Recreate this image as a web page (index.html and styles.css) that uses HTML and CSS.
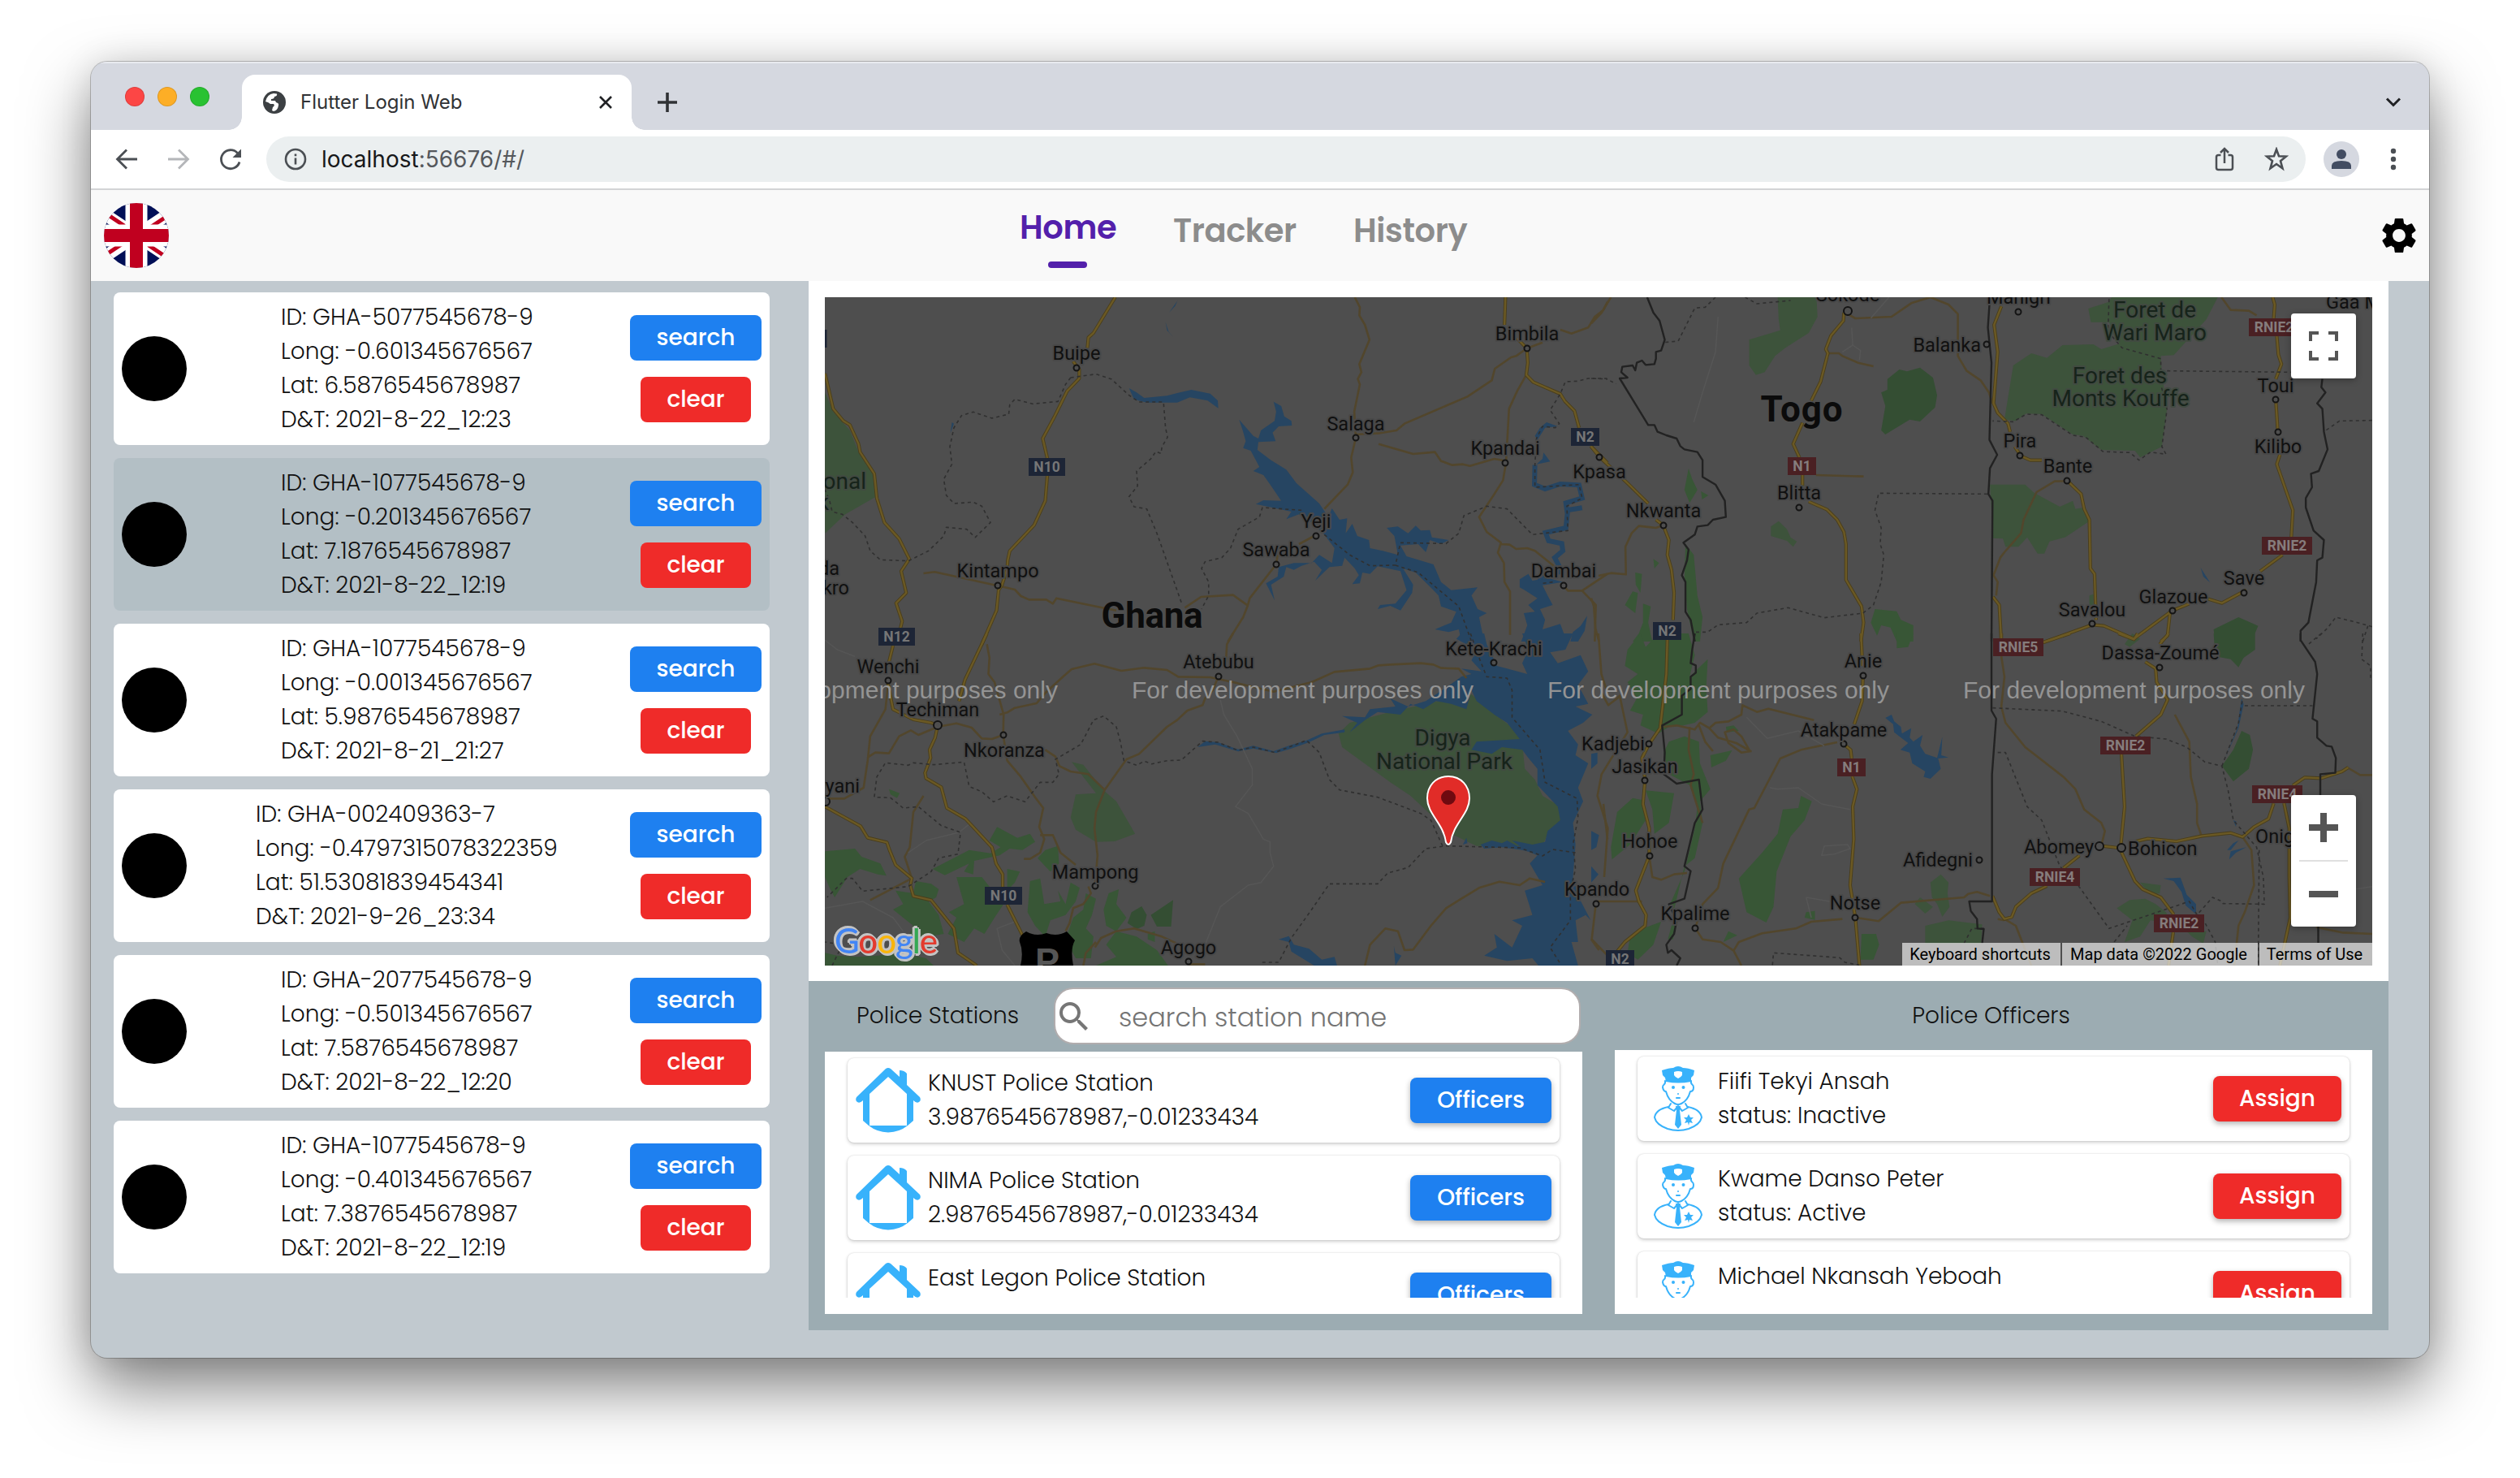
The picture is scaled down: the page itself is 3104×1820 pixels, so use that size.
FILE: index.html
```html
<!DOCTYPE html>
<html lang="en">
<head>
<meta charset="utf-8">
<title>Flutter Login Web</title>
<link rel="stylesheet" href="styles.css">
</head>
<body>
<svg width="0" height="0" class="defs">
  <symbol id="house" viewBox="0 0 80 80">
    <path d="M37 1Q40-1 43 1L54 11V3Q60 3 63 7V21L79 36Q81 40 78 42 75 44 71 40V65L64 71Q54 79 40 79.500 26 79 16 71L9 65V40Q5 44 2 42-1 40 1 36ZM40 11 17 32V71H63V32Z" fill="#38b2fb" fill-rule="evenodd"/>
  </symbol>
  <symbol id="police" viewBox="0 0 60 80">
    <g fill="none" stroke="#38b2fb" stroke-width="2" stroke-linecap="round" stroke-linejoin="round">
      <path d="M14 18C15 24 11 21 11 26Q12 31 15 31Q18 42 26 46Q30 48 34 46Q42 42 45 31Q49 31 49 26C49 21 45 24 46 18"/>
      <path d="M21 46 18 51 25 55 30 49 35 55 42 51 39 46"/>
      <path d="M18 50C8 52 2 56 1 63Q3 72 17 77Q30 81 43 77Q57 72 59 63C58 56 52 52 42 50"/>
      <path d="M28 39H32"/>
    </g>
    <g fill="#38b2fb">
      <path d="M10 5Q19 2 24 2Q30-2 36 2Q42 2 50 5L49 11 46 14V19Q30 22 15 19L14 14 11 11ZM25 7Q30 5 35 7V11Q34 13 30 15Q26 13 25 11Z" fill-rule="evenodd"/>
      <path d="M27 49H33L32 54 34 72 30 77 26 72 28 54ZM43 59 45 63H49L46 66 48 70 44 69 43 73 42 69 38 70 40 66 37 63H41Z"/>
      <circle cx="24" cy="26" r="2"/><circle cx="36.500" cy="26" r="2"/><circle cx="30" cy="34" r="1"/>
    </g>
  </symbol>
</svg>

<div class="window">
  <header class="tabstrip">
    <div class="lights"><i class="red"></i><i class="amber"></i><i class="green"></i></div>
    <div class="tab">
      <svg class="globe" viewBox="0 0 28 28"><circle cx="14" cy="14" r="14" fill="#3c4043"/><path d="M13 3Q5 4 3 13Q7 14 9 16L13 16Q15 18 12 20L11 24 13 25Q18 24 19 18Q20 15 16 14L15 12H10V10Q14 10 14 7Q18 6 17 3.500Z" fill="#fff"/></svg>
      <span class="tab-title">Flutter Login Web</span>
      <svg class="tab-close" viewBox="0 0 18 18"><path d="M2 2 16 16M16 2 2 16" stroke="#202124" stroke-width="2.600"/></svg>
    </div>
    <svg class="newtab" viewBox="0 0 24 24"><path d="M12 0V24M0 12H24" stroke="#303235" stroke-width="3.600"/></svg>
    <svg class="chevron" viewBox="0 0 20 14"><path d="M2 2.500 10 10.500 18 2.500" fill="none" stroke="#202124" stroke-width="3"/></svg>
  </header>

  <div class="toolbar">
    <svg class="tool" viewBox="0 0 32 32"><path d="M29 16H5M16 4.500 4.500 16 16 27.500" fill="none" stroke="#4b4f54" stroke-width="2.800"/></svg>
    <svg class="tool" viewBox="0 0 32 32"><path d="M3 16H27M16 4.500 27.500 16 16 27.500" fill="none" stroke="#b4b6b9" stroke-width="2.800"/></svg>
    <svg class="tool" viewBox="0 0 32 32"><path d="M27 19.500A11.500 11.500 0 1 1 24.500 8.500" fill="none" stroke="#4b4f54" stroke-width="2.800"/><path d="M29 3.500V14H18.500Z" fill="#4b4f54"/></svg>
    <div class="omnibox">
      <svg class="info" viewBox="0 0 28 28"><circle cx="14" cy="14" r="12" fill="none" stroke="#4b4f54" stroke-width="2.600"/><path d="M14 12.500V20.500M14 7.500V10.200" stroke="#4b4f54" stroke-width="2.600"/></svg>
      <span class="url"><b>localhost</b>:56676/#/</span>
      <svg class="share" viewBox="0 0 24 30"><path d="M7.500 10H4.500Q2 10 2 12.500V25.500Q2 28 4.500 28H19.500Q22 28 22 25.500V12.500Q22 10 19.500 10H16.500M12 20V2.500M7 7 12 2 17 7" fill="none" stroke="#4b4f54" stroke-width="2.500"/></svg>
      <svg class="star" viewBox="0 0 30 30"><path d="M15 3 18 11.300 27 11.600 20 17.200 22.500 26.300 15 21 7.500 26.300 10 17.200 3 11.600 12 11.300Z" fill="none" stroke="#4b4f54" stroke-width="2.600"/></svg>
    </div>
    <svg class="avatar" viewBox="0 0 44 44"><circle cx="22" cy="22" r="22" fill="#d5d8e0"/><circle cx="22" cy="16" r="6" fill="#434d62"/><path d="M10 34V30Q10 24 22 24T34 30V34Z" fill="#434d62"/></svg>
    <svg class="dots" viewBox="0 0 8 28" fill="#4b4f54"><circle cx="4" cy="4" r="3.200"/><circle cx="4" cy="14" r="3.200"/><circle cx="4" cy="24" r="3.200"/></svg>
  </div>

  <nav class="appbar">
    <svg class="flag" viewBox="0 0 80 80">
      <clipPath id="disc"><circle cx="40" cy="40" r="40"/></clipPath>
      <g clip-path="url(#disc)">
        <path fill="#010f57" d="M0 0H80V80H0Z"/>
        <path d="M-20 0 100 80M100 0-20 80" stroke="#fff" stroke-width="15"/>
        <path d="M-20-2 40 38M100 82 40 42M102 0 42 40M-22 80 38 40" stroke="#c0001f" stroke-width="5"/>
        <path d="M40 0V80M0 40H80" stroke="#fff" stroke-width="27"/>
        <path d="M40 0V80M0 40H80" stroke="#c0001f" stroke-width="16"/>
      </g>
    </svg>
    <ul class="menu">
      <li class="active"><span class="m1">Home</span></li>
      <li><span class="m2">Tracker</span></li>
      <li><span class="m3">History</span></li>
    </ul>
    <svg class="gear" viewBox="2 2 20 20"><path d="M19.140 12.940c.040-.300.060-.610.060-.940 0-.320-.020-.640-.070-.940l2.030-1.580c.180-.140.230-.410.120-.610l-1.920-3.320c-.120-.220-.370-.290-.590-.220l-2.390.960c-.500-.380-1.030-.700-1.620-.940l-.360-2.540c-.040-.240-.240-.410-.480-.410h-3.840c-.240 0-.430.170-.470.410l-.360 2.540c-.590.240-1.130.570-1.620.940l-2.390-.960c-.220-.080-.470 0-.590.220L2.740 8.870c-.120.210-.080.470.120.610l2.030 1.580c-.050.300-.090.630-.090.940s.020.640.070.940l-2.030 1.580c-.180.140-.230.410-.120.610l1.920 3.320c.120.220.370.290.590.220l2.390-.960c.500.380 1.030.700 1.620.940l.360 2.540c.050.240.240.410.480.410h3.840c.240 0 .440-.170.470-.410l.360-2.540c.590-.240 1.130-.560 1.620-.940l2.390.960c.220.080.470 0 .590-.220l1.920-3.320c.120-.220.070-.470-.120-.610l-2.010-1.580zM12 15.600c-1.980 0-3.600-1.620-3.600-3.600s1.620-3.600 3.600-3.600 3.600 1.620 3.600 3.600-1.620 3.600-3.600 3.600z"/></svg>
  </nav>

  <main class="page">
    <aside class="reports">
      <article class="report"><i class="dot"></i><div class="info-lines"><p>ID: GHA-5077545678-9</p><p>Long: -0.601345676567</p><p>Lat: 6.5876545678987</p><p>D&amp;T: 2021-8-22_12:23</p></div><div class="actions"><button class="btn blue">search</button><button class="btn red">clear</button></div></article>
      <article class="report selected"><i class="dot"></i><div class="info-lines"><p>ID: GHA-1077545678-9</p><p>Long: -0.201345676567</p><p>Lat: 7.1876545678987</p><p>D&amp;T: 2021-8-22_12:19</p></div><div class="actions"><button class="btn blue">search</button><button class="btn red">clear</button></div></article>
      <article class="report"><i class="dot"></i><div class="info-lines"><p>ID: GHA-1077545678-9</p><p>Long: -0.001345676567</p><p>Lat: 5.9876545678987</p><p>D&amp;T: 2021-8-21_21:27</p></div><div class="actions"><button class="btn blue">search</button><button class="btn red">clear</button></div></article>
      <article class="report wide"><i class="dot"></i><div class="info-lines"><p>ID: GHA-002409363-7</p><p>Long: -0.4797315078322359</p><p>Lat: 51.53081839454341</p><p>D&amp;T: 2021-9-26_23:34</p></div><div class="actions"><button class="btn blue">search</button><button class="btn red">clear</button></div></article>
      <article class="report"><i class="dot"></i><div class="info-lines"><p>ID: GHA-2077545678-9</p><p>Long: -0.501345676567</p><p>Lat: 7.5876545678987</p><p>D&amp;T: 2021-8-22_12:20</p></div><div class="actions"><button class="btn blue">search</button><button class="btn red">clear</button></div></article>
      <article class="report"><i class="dot"></i><div class="info-lines"><p>ID: GHA-1077545678-9</p><p>Long: -0.401345676567</p><p>Lat: 7.3876545678987</p><p>D&amp;T: 2021-8-22_12:19</p></div><div class="actions"><button class="btn blue">search</button><button class="btn red">clear</button></div></article>
    </aside>

    <section class="content">
      <div class="map-frame">
        <div class="map">
<svg class="canvas" viewBox="1016 366 1906 823">
  <defs>
    <g id="highways">
      <g transform="translate(1000 350) scale(.625 .33333)">
        <path d="M598 48 555 180 545 197 543 235M515 285 527 315V348L503 395 478 490 455 570 464 642V708L460 800 438 890 390 985 386 1020 385 1050 375 1110 368 1130 364 1205 335 1330M26 330 42 460 62 505 75 520 92 590 95 620 123 700 128 790 143 880 172 940 192 1015 176 1060 186 1140 166 1178 178 1245 174 1275M1367 48 1365 150M1390 200 1409 237 1411 290 1408 335 1422 362 1475 405 1484 432 1503 468 1512 530M1535 598 1568 660"/>
      </g>
      <g transform="translate(1960 350) scale(.6378 .33333)">
        <path d="M488 105 487 135 463 190 453 240 457 255 443 360 425 430M408 512 390 590 402 640M408 705 408 745M420 803 455 832 475 870 488 915 492 960V1092L522 1190 526 1250 521 1320M0 600 16 638 70 735 110 810M125 870 139 890 150 945 147 1000 155 1055 160 1140 158 1240M792 82 778 150 785 250 777 440 785 475 805 515 809 545M818 600 830 635 848 650 870 650M920 727 946 775 952 830 962 870 964 1050 972 1070 975 1240M1316 48 1320 75 1318 126M1324 192 1327 260 1333 295 1322 350M1322 426 1326 546M1330 630 1324 665 1355 835 1352 935M1335 1000 1292 1060M1265 1130 1218 1178 1190 1162M1155 1180 1122 1206 1048 1310 990 1262 968 1258 870 1325M1118 1210 1113 1298 1100 1320M776 1155 788 1185 792 1320"/>
      </g>
      <g transform="translate(1000 780) scale(.625 .33333)">
        <path d="M345 0 302 170 290 250M160 45 150 120M150 185 160 280 200 318 235 330 248 340 243 385 232 430 234 460 223 515 225 535 255 568 266 645 303 685 355 790 363 850 376 890V936M385 1002 415 1115M26 640 96 712 110 755 148 772 153 800 165 855 197 905 194 930 200 970 235 985 280 1090 288 1180 325 1227"/>
      </g>
      <g transform="translate(1960 780) scale(.6378 .33333)">
        <path d="M147 20 145 150 133 350 112 408 98 460 104 540 100 630 112 720V822L86 950 92 990 106 1040 104 1080 65 1140 50 1175M521 0 524 120M525 155 523 250 508 335M487 408 501 430 503 462M504 528 513 575 505 640 507 760 500 930 510 1050 518 1227M1090 130 1092 180 1113 245 1100 300 1052 380M1024 447 1030 640 1022 800 1050 915 1065 945 1100 975 1125 1038M1124 1104 1115 1227M1018 792 985 785M943 820 912 867M880 933 850 960 820 1010 812 1048 798 1055 788 1030 775 970M1048 770 1075 758 1130 768 1180 748 1235 737 1258 752 1280 715 1308 685 1318 628M1355 562 1378 532 1410 535 1450 510 1462 495M1338 627 1348 720V900L1350 1050 1330 1227M1070 105 1090 130M1018 0 1048 22 1055 0M1115 0 1098 40M925 0 873 33M792 0V18"/>
      </g>
    </g>
  </defs>
  <rect x="1016" y="366" width="1906" height="823" fill="#4e4e4e"/>

  <g class="park">
    <g transform="translate(1000 350) scale(.625 .33333)"><path d="M26 400 42 470 75 540 92 620 122 700 126 785 66 850 26 920Z"/></g>
    <g transform="translate(1960 350) scale(.6378 .33333)">
      <path d="M360 48H435L437 120 420 180 375 235 355 265 335 325 318 335 305 300V205L365 170 362 130ZM960 90 1000 65 1005 48H1210L1188 130 1125 262 1100 265 1102 330 1112 460 1102 600 1060 640 1050 615 985 612 950 560 930 555 870 480 840 478 820 505 798 500 815 300 850 255 880 272 910 225 970 222 985 240 1020 220 1000 140 965 140Z"/>
      <path d="M770 740 838 740 855 770 905 822 930 800 935 830 950 825 962 875 915 935 885 950 875 995 862 995 842 935 825 970 800 970 795 940 776 938ZM347 895 362 875 378 905 385 935 397 950 390 970 378 948 347 930ZM962 1150 970 1145V1200H962Z"/>
    </g>
    <g transform="translate(1000 780) scale(.625 .33333)">
      <path d="M1038 370 1060 330 1140 290 1235 250 1300 225 1340 290 1375 340 1400 400 1405 500 1425 540 1440 600 1475 640 1482 690 1450 740 1440 785 1310 785 1260 740 1180 600 1140 550 1045 420ZM512 475 535 485 575 580 600 620 637 740 597 768 560 770 520 725 510 680 520 595 560 590Z"/>
    </g>
    <g transform="translate(1960 780) scale(.6378 .33333)"><path d="M655 920 675 890 690 920 688 960 692 1010 678 1047 668 1000 658 975ZM625 1000 635 975 660 1010 645 1035ZM1015 1015 1040 985 1070 980 1090 1000 1110 1030 1120 1070 1080 1060 1060 1120 1030 1140 1045 1060ZM1060 920 1100 930 1098 960 1080 965ZM1150 1100H1188L1182 1145 1160 1120ZM645 1080 690 1060 755 1075 753 1145H645ZM1030 40 1045 0 1060 20 1040 50Z"/></g>
  </g>
  <g class="forest">
    <g transform="translate(1960 350) scale(.6378 .33333)">
      <path class="deep" d="M595 315 610 322 635 308 660 345 668 410 664 455 635 507 615 500 568 555 560 540 568 450 560 400 572 390V350Z"/>
      <path d="M188 680 195 720 205 760 190 808 180 760ZM212 765 226 780 214 795ZM548 1200 590 1208 598 1240 622 1260V1320H590L578 1268 560 1260 552 1298 540 1250ZM85 1065 98 1070 95 1140 86 1110ZM120 1015 131 1030 122 1050ZM80 1135 90 1140 85 1215 65 1185ZM100 1180 115 1190 110 1250 118 1320H80L92 1290 100 1250ZM182 960 198 1000 205 1150 215 1230 210 1320 198 1320 185 1200 180 1080Z"/>
      <path class="deep" d="M1202 1275 1250 1230 1288 1262 1275 1320H1205Z"/>
    </g>
    <g transform="translate(1000 780) scale(.625 .33333)">
      <path d="M26 805 85 795 98 825 135 850 147 895 130 890 95 870 70 900 45 975 35 940 26 900ZM152 575 173 590 168 608 155 595ZM365 715 405 755 430 740 440 770 415 800 390 795 370 820 320 840 318 890 300 880 310 850 262 893 238 870 290 820 310 800 352 812 372 790 350 765ZM165 950 200 960 205 915 235 925 250 945 245 975 230 990 250 1040 260 1110 230 1120 222 1185 190 1120 200 1080 160 1020 180 1000ZM285 900 335 900 350 935 378 1000 360 1050 340 1110 320 1090 300 1140 268 1110 285 1050 270 1030 300 1000ZM385 870 410 880 400 920 385 950ZM460 800 485 785 487 850 470 880 460 860 445 830ZM430 915 450 905 458 1000 490 990 485 950 500 1000 510 920 528 940 520 990 500 1040 470 1060 460 1120 440 1080 425 1030ZM540 960 560 980 552 1040 540 1090 555 1120 550 1200 520 1200 500 1130 515 1050 535 1020ZM585 960 605 945 600 1000 620 1050 600 1100 580 1080 575 1020ZM600 1100 640 1120 680 1170 702 1227H560L600 1195 580 1150ZM26 1180 50 1190 90 1195 130 1190 175 1180 225 1200 240 1227H26ZM662 1110 676 1100V1140L662 1130Z"/>
      <path class="deep" d="M668 1040 712 985 708 1083H680ZM630 1030 650 1008 660 1040 655 1080 640 1092 622 1070Z"/>
    </g>
    <g transform="translate(1960 780) scale(.6378 .33333)">
      <path d="M70 60 95 0 105 50 120 20 135 0H188L200 80 190 160 225 95 222 200 225 290 200 330 178 340 150 345 130 370 95 340 100 300 75 285 88 240 70 180 90 150 65 120ZM590 0H622L612 50 590 55ZM405 600 426 620 412 690 385 750 358 880 352 1010 338 1068 300 1030 285 905 330 810 360 740 370 650 400 645ZM40 835 38 790 50 660 80 608 98 615 105 690 75 780ZM150 400 180 380 208 400 210 480 230 575 210 620 215 700 200 830 180 860 160 1020 150 1010 180 880 200 720 205 640 190 560 150 520 140 440ZM105 580 160 590 150 700 122 740 118 650ZM230 450 272 432 260 470 232 495ZM100 1090 135 1065 120 1150 90 1205 70 1180 75 1120ZM165 1060 158 1130 148 1130 155 1080ZM265 1100 282 1115 255 1140ZM415 1030 432 1025V1058L412 1050ZM522 1110H550L556 1150 545 1205H520ZM260 345 275 340 285 360 262 365Z"/>
      <path class="deep" d="M1202 0H1282V60L1260 90 1250 125 1235 95 1205 85ZM1256 360 1272 375 1278 430 1270 500 1240 547 1218 490 1240 430Z"/>
    </g>
  </g>

  <g class="water">
    <g transform="translate(1000 350) scale(.625 .33333)">
      <path d="M625 384 640 400 655 420 700 412 720 402 748 390 785 404 800 430 801 458 780 430 745 418 720 437H660L635 425ZM910 434 925 450 931 488 945 505 946 522 920 525 908 548 914 580 880 583 878 612 905 650 935 685 955 735 1000 810 1018 860 1025 828 1040 870 1055 865 1052 920 1065 885 1075 930 1098 945 1100 975 1125 985 1155 1000 1148 930 1133 900 1155 895 1175 920 1190 892 1200 910 1218 908 1222 935 1255 945 1240 960 1218 945 1210 990 1195 960 1160 965 1172 1005 1225 1035 1240 1100 1260 1130 1312 1120 1300 1150 1312 1200 1330 1215 1315 1230 1325 1320H1280L1275 1275 1255 1285 1228 1275 1260 1250 1270 1210 1240 1190 1235 1150 1225 1130 1190 1065 1165 1050 1185 1110 1183 1140 1160 1205 1140 1188 1115 1200 1120 1185 1150 1180 1172 1130 1160 1060 1115 1042 1100 1070 1085 1065 1080 1105 1065 1108 1078 1075 1070 1050 1050 1010 1045 1040 1020 1045 992 1095 1005 1055 990 1025 965 1040 950 1055 935 1045 930 1080 905 1110 912 1168 895 1105 918 1080 920 1045 950 1030 985 1030 1000 1000 1025 1030 1030 975 1010 925 985 880 960 850 935 868 945 840 875 812 890 798 925 800 905 745 890 705 870 690 882 675 865 615 850 605 855 580 850 545 842 500 870 560 880 570 885 540 912 505 915 470ZM1448 510 1470 525 1445 530 1430 575 1425 560 1435 530ZM1442 622 1455 655 1428 665 1440 645ZM1495 1320 1500 1285 1515 1262 1528 1225 1523 1280 1510 1320ZM1395 1090 1412 1070 1420 1095 1450 1085 1480 1100 1440 1112 1450 1150 1460 1185 1435 1200 1445 1240 1440 1275 1475 1255 1482 1290 1468 1320H1398L1410 1260 1403 1215 1425 1210 1412 1185 1430 1160 1405 1130 1395 1120ZM722 55 716 80 704 105 720 62ZM697 140 703 175 712 195 700 170ZM276 510 280 515 273 550Z"/>
      <path class="river" d="M1425 668 1424 740 1445 756 1475 738 1512 742 1518 790 1486 808 1488 835 1518 826M1490 830 1486 900 1446 918 1452 948 1478 958 1480 985 1464 1010 1478 1060 1430 1085"/>
    </g>
    <g transform="translate(1000 780) scale(.625 .33333)">
      <path d="M1280 0H1325L1330 40 1350 120 1370 130 1410 150 1400 110 1412 60 1400 0H1500L1485 60 1455 70 1470 110 1515 80 1530 140 1510 190 1530 260 1505 270 1538 300 1520 330 1490 360 1510 410 1505 450 1530 480 1510 570 1520 620 1500 700 1505 780 1500 900 1510 970 1535 1060 1525 1040 1505 1060 1510 1140 1497 1140 1510 1227H1432L1420 1200 1370 1210 1325 1190 1350 1160 1345 1110 1380 1160 1400 1080 1380 1060 1420 1040 1405 950 1440 930 1415 850 1430 820 1405 800 1380 765 1420 780 1445 770 1450 730 1475 690 1470 640 1450 600 1430 560 1430 500 1412 460 1400 430 1360 420 1340 445 1300 430 1310 400 1350 395 1395 390 1370 330 1345 300 1310 250 1300 210 1290 280 1260 260 1230 250 1205 280 1180 260 1160 300 1115 290 1090 320 1060 365 1075 330 1045 305 1090 310 1100 280 1150 270 1140 240 1175 270 1210 250 1250 200 1280 160 1300 150 1280 130 1320 140 1300 100 1310 60 1270 20ZM760 420 775 398 800 402 840 428 870 415 910 435 940 415 975 395 1005 370 1050 355 1050 365 1010 375 980 402 945 425 915 442 870 425 840 436 795 410ZM1318 780 1340 765 1360 775 1370 765 1390 785 1420 795 1440 820 1400 800 1360 790 1325 795ZM1283 780 1290 755 1292 775ZM920 1130 940 1118 950 1150 980 1165 1005 1205 1030 1195 1035 1227H990L945 1175 940 1140ZM1147 1155 1150 1180 1162 1190 1150 1227Z"/>
    </g>
    <g transform="translate(1960 780) scale(.6378 .33333)">
      <path d="M568 312 580 300 585 325 598 345 600 370 618 350 615 385 622 400 640 375 635 415 645 445 668 460 678 382 676 450 690 458 670 462 675 500 655 537 642 530 645 510 620 480 615 440 597 430 612 405 595 380 585 365 583 335ZM1105 905 1138 902 1150 965 1168 1000V1037L1148 1005 1140 955 1125 915ZM1256 240 1260 262 1250 350 1222 470 1248 350 1252 290ZM1240 690 1246 695 1245 715ZM1228 800 1240 775 1250 765 1235 800ZM1232 835 1235 805 1265 790 1245 810ZM0 445 12 440V480L0 500ZM0 730 15 745 10 790 0 800ZM0 860 14 890 0 920Z"/>
    </g>
    <g transform="translate(1960 350) scale(.6378 .33333)"><path d="M1177 1048 1195 1102 1182 1080Z"/></g>
  </g>

  <g class="minor">
    <g transform="translate(1000 350) scale(.625 .33333)"><path d="M1070 48 1080 85 1079 115 1090 150 1099 205 1079 295 1083 325 1076 350 1080 370 1069 470 1072 567 1063 640 1066 695 1056 740 1010 830M1072 555 1120 550 1152 540 1168 515 1292 415 1340 355 1346 312 1378 270 1388 265 1409 237 1440 215M1475 168 1497 182 1530 160 1543 120 1560 95 1568 65M1117 590 1185 627 1228 620 1240 653 1262 668 1283 665 1297 671 1345 645 1360 650 1368 660 1362 725 1345 775 1315 860 1330 915 1358 955 1352 992 1364 1030 1365 1100 1376 1135V1295M1408 335 1390 395 1374 460 1368 660M1358 960 1375 962 1388 978 1410 975 1425 985 1462 1040M220 1068 242 1063 370 1115 400 1128 412 1152 428 1165 462 1165 475 1180 482 1160 560 1190 600 1205M735 1195 767 1155 830 1148 859 1187 850 1230 820 1320M859 1187 863 1160 915 1035 918 1000M960 960 990 930M1481 1112 1490 1132H1518L1568 1070M1518 1132 1545 1185 1543 1320"/></g>
    <g transform="translate(1960 350) scale(.6378 .33333)"><path d="M38 48 20 105 0 145M495 110 510 126 580 120 618 70 655 48 690 75 708 110V265L725 320 752 355 768 400 775 440M457 255 478 255 485 265 515 290 545 303M434 705 526 710M920 727 895 728 860 768 835 870 830 920 798 990 790 1010 777 1075 785 1100 782 1150M14 1077 38 1067 67 1072 66 970 78 920 92 893 125 900 139 890M0 1160 5 1190 8 1270 15 1320M1217 48 1235 95 1270 98 1285 115"/></g>
    <g transform="translate(1000 780) scale(.625 .33333)"><path d="M830 0 818 40 816 105M345 40 350 90 348 150 360 180 363 200 378 300 377 375 385 470 412 530 440 605 456 645 448 715 458 760 450 810 430 833 418 833M370 300 385 292 400 275 443 258 460 220 495 160 512 132 557 112 610 138 655 127 700 135 722 160 785 162 830 180 910 215 985 180 1030 142 1100 130 1117 118 1140 115 1200 110 1225 115 1240 128 1275 130 1290 165M801 160 790 210 775 240 770 265 740 285 720 320 700 345 645 445 620 465 577 578 560 660 557 720 563 820 558 933M460 430 480 455 488 490 510 510 545 520 577 578M150 190 145 280 115 380 110 470 102 570 64 610H26M110 458 125 440 152 443 172 380 195 358 210 375 248 345 285 332 315 348 335 388 355 390 377 375M220 600 200 660 193 790 183 825 197 905 115 985M450 745 475 745 490 810 520 855M545 935 550 960 535 1000 515 1015 508 1070 500 1100M558 1160 570 1125 600 1100 635 1090 690 1120 725 1150M743 1222H775M535 1227 540 1180 560 1140M1090 1227 1100 1150 1130 1090 1155 1100 1168 1170 1185 1168 1220 1080 1250 1015 1280 980 1315 940 1355 917 1395 930 1415 905 1445 918M1545 1000 1537 1130 1568 1190M1560 630 1568 760M1550 0 1556 150 1568 220"/></g>
    <g transform="translate(1960 780) scale(.6378 .33333)"><path d="M475 402 405 430 365 462 315 645 305 650 255 850 245 940 230 970 215 1000 201 1089 215 1130 250 1140 275 1172 285 1140 330 1108 395 1090 425 1065 485 1055M112 822 118 900 135 910 160 890 185 885M98 990 10 990M512 1050 555 1063 598 995 720 975 728 962 745 955 770 970M275 1172 290 1227M140 345 165 340 200 355 210 330 228 350 240 330 265 325 290 300 292 265 320 290 342 278 430 320M208 340 220 400 235 435M228 350 245 385 280 405 308 435 290 440 265 405 258 365 275 355 290 380 305 430M190 345 188 430 198 520 192 560 205 640 215 700M792 84 798 160 792 270 800 330 838 420 912 530 935 575 952 650 985 700 992 730 985 785M1127 300 1155 400 1158 530 1170 630V700L1178 745M798 1055 820 1080 850 1227M1258 752 1275 800 1280 930 1262 1030 1250 1080 1242 1227M1460 495 1485 523H1508M1400 1085 1450 1105 1508 1110M20 220 33 265 50 240 55 230 70 365 20 520 12 600 32 720 25 900M0 1130 15 1170M785 1055 798 1060"/></g>
  </g>
  <g class="faint">
    <g transform="translate(1000 780) scale(.625 .33333)"><path d="M805 245 812 300 838 380 868 500V560L835 640 860 665 890 760 903 770V810L910 860 885 920 860 930 805 1010 775 1150M26 25 50 60 85 85M310 705 290 735 225 765 190 810M26 1015 100 990 160 1050 180 1100M400 1065 365 1090 375 1170 400 1227"/></g>
    <g transform="translate(1960 780) scale(.6378 .33333)"><path d="M345 570 360 575 400 570 445 630 500 650M445 820 450 785 495 780 500 795 470 815ZM415 975 425 1050M415 975 490 1000M300 310 340 388 400 360 450 415M1475 945 1508 935"/></g>
    <g transform="translate(1960 350) scale(.6378 .33333)"><path d="M245 120 240 250 215 400 198 510M503 160 505 225 485 250M505 225 520 245 518 280M575 48 540 125"/></g>
  </g>
  <use href="#highways" class="casing"/>
  <use href="#highways" class="core"/>

  <g class="dash">
    <g transform="translate(1000 350) scale(.625 .33333)"><path d="M510 345 560 332 590 350 625 410 645 435 693 435 697 530 701 565 690 600 688 625 678 618 668 645 640 690 642 745 625 785 635 822 660 830 680 920 730 1185M510 345 500 370 485 433 435 442 400 425 390 445 388 480 355 495 318 472 295 485 280 530 272 600 276 665 260 720 265 780 280 810 318 805 335 820 352 880 322 935 305 905 265 898 260 930 230 985 190 1022 135 1018 115 985 105 930 80 880 60 850 40 840 35 800 26 760M965 835 888 825 882 860 840 905 825 975 808 1010 775 1025 768 1050 782 1100V1150L768 1200M1010 925 1060 1000 1100 1040 1150 1038 1160 955 1250 958 1275 920 1285 855 1330 820 1370 830 1420 925 1490 910 1488 820 1518 790 1512 740 1470 745 1425 750V670L1428 570 1440 525 1465 530 1473 515 1455 465 1475 405 1485 360 1510 358 1530 348 1568 350M1150 1038 1195 1065 1275 1190 1300 1320M1460 1100 1440 1105"/></g>
    <g transform="translate(1960 350) scale(.6378 .33333)"><path d="M0 348 28 348 48 368M240 48 220 85 200 88 168 210 140 215M297 48 320 72 385 60M1000 55 998 175 1025 235 1100 275V370L1112 462 1102 600 1110 628 1080 620 1058 650 1040 622 988 618 955 565 930 558 870 482 840 480 815 508 775 505M1112 320 1355 325M1508 503 1445 505 1415 545M765 775 555 772 548 835 560 900 558 960 565 1000 560 1100 545 1185 525 1215 450 1232 380 1195 320 1215 300 1250 245 1258 225 1285 200 1285M1508 1265 1480 1250 1438 1230 1422 1270 1400 1310M1500 1262 1490 1320"/></g>
    <g transform="translate(1000 780) scale(.625 .33333)"><path d="M1298 0 1315 90 1330 160 1370 165 1380 210V310L1435 430 1445 550 1508 610 1510 680 1500 780 1505 870 1495 950V1060L1455 1160 1475 1220M1505 810 1460 798 1440 822 1395 792 1250 785 1210 795 1175 865 1135 885 1115 925H1020L985 1020 945 1125 920 1215H885M1243 785 1220 690 1200 665 1115 605 1040 578 1020 540 1000 440 975 395 912 440 870 420 840 432 800 402 770 398 728 468 700 470 670 482 655 472 640 487 615 470 608 400 600 345 575 305 555 320 530 410 480 465 487 520 475 550 450 550 420 622 385 600 358 622 335 585 310 565 300 475 240 485 200 478 190 487 145 478 128 530 123 605 155 607 180 645 210 640 255 710 293 735 288 815 250 830 235 880 190 935 100 952 80 905 68 905 30 975M40 1227 60 1150 26 1140"/></g>
    <g transform="translate(1960 780) scale(.6378 .33333)"><path d="M785 440 800 440 842 640 870 690 905 860 940 930 1000 1090 1155 990 1170 1040 1200 975 1218 990 1220 998 1300 1000 1298 900 1285 790 1240 690 1230 580 1218 490 1185 475 1150 420 1110 390 1050 380 985 325 910 287 775 275M1218 490 1250 330 1258 240M1262 267H1393M1290 800 1288 1227M1010 1140 1035 1080M1180 1050 1205 1140 1210 1227M720 1145 735 1090 760 1090M350 1225 352 1180 480 1198 490 1215 518 1225M1410 0 1385 40M1490 0 1488 95 1505 120V165"/></g>
  </g>
  <g class="border">
    <g transform="translate(1960 350) scale(.6378 .33333)"><path d="M108 48 120 105 132 135 142 205 135 245 125 250V275L122 295 105 298 98 282 88 290 85 318 80 300 60 305 58 325 70 345 55 348 110 520 122 520 128 545 145 558 165 570 172 598 180 610 205 620 215 650V712L240 740 258 800 260 860 235 870 225 890 205 895 200 925 178 955 188 980 185 1020 175 1075 182 1100V1210L192 1240 200 1320M770 48 766 160 773 290 769 575 784 630 770 680 767 775 775 800 773 1320M1412 350 1410 380 1418 400 1402 440 1412 460 1415 545 1422 610 1405 690 1390 700 1392 750 1380 790V825L1395 910 1415 945 1412 1010 1402 1020 1400 1100 1385 1250 1370 1280V1320"/></g>
    <g transform="translate(1960 780) scale(.6378 .33333)"><path d="M200 0 195 60 192 110 202 118V145L192 160V205L175 230V300L137 340 142 440 140 520 165 555 208 540 215 650 200 700 180 860 192 878 180 980 150 1000 165 1060 160 1110 145 1150 148 1180 155 1170 172 1200 165 1227M773 0V285L782 315 774 520V990H730L733 1025 745 1055 746 1090 758 1092 755 1145M1370 0V25L1398 105 1402 150 1393 315 1402 325V385L1420 415 1430 418 1438 460 1437 515 1408 520V600M1404 1083V1143"/></g>
  </g>

  <g class="town-dots">
    <circle cx="1326" cy="453" r="3.500"/><circle cx="1881" cy="429" r="3.500"/><circle cx="1670" cy="539" r="3.500"/><circle cx="1854" cy="570" r="3.500"/><circle cx="1621" cy="660" r="3.500"/><circle cx="1572" cy="695" r="3.500"/><circle cx="1229" cy="721" r="3.500"/><circle cx="1926" cy="721" r="3.500"/><circle cx="1970" cy="563" r="3.500"/>
    <circle cx="2276" cy="383" r="5"/><circle cx="2447" cy="424" r="3.500"/><circle cx="2486" cy="384" r="3.500"/><circle cx="2803" cy="492" r="3.500"/><circle cx="2488" cy="561" r="3.500"/><circle cx="2546" cy="592" r="3.500"/><circle cx="2806" cy="532" r="3.500"/><circle cx="2216" cy="625" r="3.500"/><circle cx="2049" cy="647" r="3.500"/><circle cx="2764" cy="730" r="3.500"/><circle cx="2676" cy="752" r="3.500"/><circle cx="2577" cy="768" r="3.500"/>
    <circle cx="1094" cy="838" r="3.500"/><circle cx="1155" cy="893" r="5"/><circle cx="1236" cy="905" r="3.500"/><circle cx="1017" cy="987" r="5"/><circle cx="1501" cy="833" r="3.500"/><circle cx="1840" cy="816" r="3.500"/><circle cx="1349" cy="1091" r="3.500"/><circle cx="1464" cy="1184" r="3.500"/><circle cx="1966" cy="1113" r="3.500"/>
    <circle cx="2031" cy="916" r="3.500"/><circle cx="2026" cy="961" r="3.500"/><circle cx="2032" cy="1054" r="3.500"/><circle cx="2088" cy="1143" r="3.500"/><circle cx="2285" cy="1130" r="3.500"/><circle cx="2438" cy="1059" r="3.500"/><circle cx="2271" cy="916" r="3.500"/><circle cx="2295" cy="832" r="3.500"/><circle cx="2586" cy="1042" r="5"/><circle cx="2613" cy="1044" r="5"/><circle cx="2660" cy="822" r="3.500"/>
  </g>

  <g class="shield national">
    <rect x="1267" y="564" width="45" height="22"/><rect x="1082" y="773" width="45" height="22"/><rect x="1935" y="527" width="35" height="22"/><rect x="2036" y="766" width="35" height="22"/><rect x="1213" y="1092" width="46" height="22"/><rect x="1978" y="1170" width="35" height="22"/><rect x="1016" y="406" width="2.500" height="22"/>
    <text x="1289.500" y="581">N10</text><text x="1104.500" y="790">N12</text><text x="1952.500" y="544">N2</text><text x="2053.500" y="783">N2</text><text x="1236" y="1109">N10</text><text x="1995.500" y="1187">N2</text>
  </g>
  <g class="shield inter">
    <rect x="2770" y="392" width="62" height="22"/><rect x="2786" y="661" width="62" height="22"/><rect x="2202" y="563" width="35" height="22"/><rect x="2455" y="786" width="62" height="22"/><rect x="2587" y="907" width="62" height="22"/><rect x="2774" y="967" width="62" height="22"/><rect x="2500" y="1069" width="62" height="22"/><rect x="2653" y="1126" width="62" height="22"/><rect x="2263" y="934" width="35" height="22"/>
    <text x="2801" y="409">RNIE2</text><text x="2817" y="678">RNIE2</text><text x="2219.500" y="580">N1</text><text x="2486" y="803">RNIE5</text><text x="2618" y="924">RNIE2</text><text x="2805" y="984">RNIE4</text><text x="2531" y="1086">RNIE4</text><text x="2684" y="1143">RNIE2</text><text x="2280.500" y="951">N1</text>
  </g>

  <g class="town">
    <text x="1326" y="443">Buipe</text><text x="1881" y="419">Bimbila</text><text x="1670" y="530">Salaga</text><text x="1854" y="560">Kpandai</text><text x="1621" y="650">Yeji</text><text x="1572" y="685">Sawaba</text><text x="1229" y="711">Kintampo</text><text x="1926" y="711">Dambai</text><text x="1970" y="589">Kpasa</text>
    <text class="end" x="1034" y="708">da</text><text class="end" x="1046" y="732">kro</text>
    <text x="2276" y="371">Sokode</text><text class="end" x="2440" y="433">Balanka</text><text class="start" x="2447" y="374">Manigri</text><text class="start" x="2865" y="380">Gaa Mata</text><text x="2803" y="483">Toui</text><text x="2488" y="551">Pira</text><text x="2547" y="582">Bante</text><text x="2806" y="558">Kilibo</text><text x="2216" y="615">Blitta</text><text x="2049" y="637">Nkwanta</text><text x="2764" y="720">Save</text><text x="2677" y="743">Glazoue</text><text x="2577" y="759">Savalou</text>
    <text x="1094" y="829">Wenchi</text><text x="1155" y="882">Techiman</text><text x="1237" y="932">Nkoranza</text><text class="end" x="1059" y="976">yani</text><text x="1501" y="823">Atebubu</text><text x="1840" y="807">Kete-Krachi</text><text x="1349" y="1082">Mampong</text><text x="1464" y="1175">Agogo</text><text x="1967" y="1103">Kpando</text>
    <text x="1987" y="924">Kadjebi</text><text x="2026" y="952">Jasikan</text><text x="2032" y="1044">Hohoe</text><text x="2088" y="1133">Kpalime</text><text x="2285" y="1120">Notse</text><text x="2387" y="1067">Afidegni</text><text x="2271" y="907">Atakpame</text><text x="2295" y="822">Anie</text><text class="end" x="2579" y="1051">Abomey</text><text class="start" x="2621" y="1053">Bohicon</text><text class="start" x="2778" y="1038">Onigbolo</text><text x="2661" y="812">Dassa-Zoumé</text>
  </g>
  <g class="town reserve">
    <text class="end" x="1067" y="602">onal</text><text class="end" x="1021" y="628">k</text>
    <text x="2654" y="391">Foret de</text><text x="2654" y="419">Wari Maro</text><text x="2611" y="472">Foret des</text><text x="2612" y="500">Monts Kouffe</text>
    <text x="1777" y="918">Digya</text><text x="1779" y="947">National Park</text>
  </g>
  <g class="country"><text x="1419" y="773" textLength="125">Ghana</text><text x="2219" y="519" textLength="101">Togo</text></g>

  <g class="badge">
    <path d="M1256 1160Q1254 1153 1264 1147Q1276 1154 1289 1149Q1302 1154 1314 1147L1324 1158Q1318 1168 1322 1189H1257Q1261 1172 1256 1160Z"/>
    <text x="1290" y="1199">P</text>
  </g>

  <g class="watermark">
    <text x="882" y="860" textLength="421">For development purposes only</text><text x="1394" y="860" textLength="421">For development purposes only</text><text x="1906" y="860" textLength="421">For development purposes only</text><text x="2418" y="860" textLength="421">For development purposes only</text>
  </g>
  <g class="logo">
    <text x="1028" y="1174" textLength="127"><tspan fill="#4285f4">G</tspan><tspan fill="#e33b2e">o</tspan><tspan fill="#f9b50b">o</tspan><tspan fill="#4285f4">g</tspan><tspan fill="#34a853">l</tspan><tspan fill="#e33b2e">e</tspan></text>
  </g>
  <path d="M1784 956C1768 956 1758 968 1758 983C1758 1002 1778 1014 1781 1037Q1784 1043 1787 1037C1790 1014 1810 1002 1810 983C1810 968 1800 956 1784 956Z" fill="#e12c28" stroke="#fff" stroke-width="2"/>
  <circle cx="1784" cy="982" r="9" fill="#6f0a10"/>
</svg>
          <div class="control fullscreen"><svg viewBox="0 0 36 36"><path d="M2 12V2H12M24 2H34V12M34 24V34H24M12 34H2V24" fill="none" stroke="#555" stroke-width="4"/></svg></div>
          <div class="control zoom"><svg viewBox="0 0 36 36"><path d="M18 0V36M0 18H36" stroke="#555" stroke-width="8"/></svg><hr><svg viewBox="0 0 36 36"><path d="M0 18H36" stroke="#555" stroke-width="8"/></svg></div>
          <div class="credits"><span>Keyboard shortcuts</span><span>Map data ©2022 Google</span><span>Terms of Use</span></div>
        </div>
      </div>

      <div class="lower">
        <div class="column stations">
          <div class="column-head"><h2>Police Stations</h2>
            <div class="search"><svg viewBox="3 3 17.500 17.500"><path d="M15.500 14h-.790l-.280-.270A6.470 6.470 0 0 0 16 9.500 6.500 6.500 0 1 0 9.500 16c1.610 0 3.090-.590 4.230-1.570l.270.280v.790l5 4.990L20.490 19l-4.990-5zm-6 0C7.010 14 5 11.990 5 9.500S7.010 5 9.500 5 14 7.010 14 9.500 11.990 14 9.500 14z" fill="#767676"/></svg><span>search station name</span></div>
          </div>
          <div class="panel"><div class="scroll">
            <div class="row"><svg class="house"><use href="#house"/></svg><div class="who"><p>KNUST Police Station</p><p>3.9876545678987,-0.01233434</p></div><button class="btn blue">Officers</button></div>
            <div class="row"><svg class="house"><use href="#house"/></svg><div class="who"><p>NIMA Police Station</p><p>2.9876545678987,-0.01233434</p></div><button class="btn blue">Officers</button></div>
            <div class="row"><svg class="house"><use href="#house"/></svg><div class="who"><p>East Legon Police Station</p><p>4.9876545678987,-0.01233434</p></div><button class="btn blue">Officers</button></div>
          </div></div>
        </div>
        <div class="column officers">
          <div class="column-head"><h2>Police Officers</h2></div>
          <div class="panel"><div class="scroll">
            <div class="row"><svg class="police"><use href="#police"/></svg><div class="who"><p>Fiifi Tekyi Ansah</p><p>status: Inactive</p></div><button class="btn red">Assign</button></div>
            <div class="row"><svg class="police"><use href="#police"/></svg><div class="who"><p>Kwame Danso Peter</p><p>status: Active</p></div><button class="btn red">Assign</button></div>
            <div class="row"><svg class="police"><use href="#police"/></svg><div class="who"><p>Michael Nkansah Yeboah</p><p>status: Active</p></div><button class="btn red">Assign</button></div>
          </div></div>
        </div>
      </div>
    </section>
  </main>
</div>
</body>
</html>
```
FILE: styles.css
```css
* { box-sizing: border-box; margin: 0; padding: 0; }
body {
  width: 3104px; height: 1820px; overflow: hidden; background: #fff;
  padding: 76px 112px; color: #111;
  font: 300 28px/42px Poppins, Inter, "Open Sans", sans-serif;
}
.defs { position: absolute; }
svg { display: block; flex: none; }
.window {
  width: 2880px; height: 1596px; border-radius: 20px; overflow: hidden;
  display: flex; flex-direction: column; background: #c1c9cf;
  box-shadow: 0 0 0 1px rgba(0,0,0,.22), 0 36px 80px rgba(0,0,0,.5), 0 0 40px rgba(0,0,0,.1);
}

/* browser chrome */
.tabstrip { height: 84px; flex: none; background: #d5d8e0; display: flex; align-items: flex-end; box-shadow: inset 0 2px 0 #e8eaef; }
.lights { display: flex; gap: 16px; padding-left: 42px; height: 53px; width: 186px; align-items: flex-start; }
.lights i { width: 24px; height: 24px; border-radius: 50%; border: 1px solid rgba(0,0,0,.12); }
i.red { background: #fc4645; } i.amber { background: #fdae26; } i.green { background: #29c232; }
.tab { position: relative; width: 480px; height: 68px; background: #fff; border-radius: 16px 16px 0 0; display: flex; align-items: center; padding: 0 23px 0 26px; }
.tab::before, .tab::after { content: ""; position: absolute; bottom: 0; width: 16px; height: 16px; }
.tab::before { left: -16px; background: radial-gradient(circle at 0 0, transparent 15.500px, #fff 16px); }
.tab::after { right: -16px; background: radial-gradient(circle at 100% 0, transparent 15.500px, #fff 16px); }
.globe { width: 28px; height: 28px; }
.tab-title { flex: 1; margin-left: 18px; font: 400 24px/30px Inter, sans-serif; color: #303235; }
.tab-close { width: 18px; height: 18px; }
.newtab { width: 24px; height: 24px; margin: 0 auto 22px 32px; }
.chevron { width: 20px; height: 14px; margin: 0 34px 27px 0; }
.toolbar { height: 74px; flex: none; background: #fff; border-bottom: 2px solid #d3d4d6; display: flex; align-items: center; padding-left: 28px; }
.tool { width: 32px; height: 32px; margin-right: 32px; }
.toolbar .tool:nth-child(3) { margin-right: 28px; }
.omnibox { width: 2512px; height: 56px; border-radius: 28px; background: #ebeff0; display: flex; align-items: center; padding: 0 21px 0 22px; }
.info { width: 28px; height: 28px; }
.url { flex: 1; margin-left: 18px; font: 400 28px/36px Inter, sans-serif; color: #55585c; }
.url b { font-weight: 400; color: #17181a; }
.share { width: 24px; height: 30px; margin-right: 37px; }
.star { width: 30px; height: 30px; }
.avatar { width: 44px; height: 44px; margin-left: 22px; }
.dots { width: 8px; height: 28px; margin-left: 38px; }

/* app bar */
.appbar { height: 112px; flex: none; background: #f9f9f9; display: flex; align-items: center; padding: 0 16px; }
.flag { width: 80px; height: 80px; }
.menu { flex: 1; list-style: none; display: flex; height: 112px; padding-left: 1048px; font-size: 40px; line-height: 56px; font-weight: 600; letter-spacing: -.4px; color: #8c8c8c; }
.menu li { padding-top: 22px; }
.menu li + li { margin-left: 72px; }
.menu li + li + li { margin-left: 71px; }
.menu li.active { padding-top: 18px; color: #5320ab; display: flex; flex-direction: column; align-items: center; }
.menu li.active::after { content: ""; width: 48px; height: 8px; border-radius: 4px; background: #5320ab; margin-top: 14px; }
.menu span { display: block; white-space: nowrap; }
.m1 { width: 117px; } .m2 { width: 151px; } .m3 { width: 138px; }
.gear { width: 44px; height: 44px; margin-right: -1px; }

/* reports */
.page { flex: 1; display: flex; min-height: 0; }
.reports { width: 884px; padding: 14px 0 0 28px; display: flex; flex-direction: column; gap: 16px; }
.report { width: 808px; height: 188px; border-radius: 8px; background: #fff; display: flex; align-items: center; padding: 0 10px; }
.report.selected { background: #b3bfc5; }
.dot { width: 80px; height: 80px; border-radius: 50%; background: #000; }
.info-lines { flex: 1; padding: 0 0 0 116px; white-space: nowrap; }
.wide .info-lines { padding-left: 85px; }
.actions { display: flex; flex-direction: column; align-items: center; gap: 20px; width: 162px; }
.btn { height: 56px; border: 0; border-radius: 8px; color: #fff; font: inherit; font-weight: 500; }
.blue { background: #1e80f0; width: 162px; }
.red { background: #ef2b29; width: 136px; }

/* content */
.content { width: 1946px; height: 1292px; display: flex; flex-direction: column; background: #9cacb2; }
.map-frame { height: 862px; padding: 20px 20px 19px; background: #fff; flex: none; }
.map { position: relative; width: 1906px; height: 823px; overflow: hidden; }
.canvas { width: 1906px; height: 823px; }
.canvas path { vector-effect: non-scaling-stroke; }
.park { fill: #3d533b; } .forest { fill: #385636; } .deep { fill: #344e33; }
.water { fill: #264562; }
.river { fill: none; stroke: #264562; stroke-width: 6; }
.minor, .faint, .casing, .core, .dash, .border { fill: none; stroke-linejoin: round; }
.minor { stroke: #52462c; stroke-width: 2.600; }
.faint { stroke: #565656; stroke-width: 1.500; }
.casing { stroke: #4a3e1b; stroke-width: 4.200; }
.core { stroke: #6b5924; stroke-width: 2.400; }
.dash { stroke: #303030; stroke-width: 1.600; stroke-dasharray: 4 4; }
.border { stroke: #222; stroke-width: 2.400; }
.town-dots { fill: #4e4e4e; stroke: #141414; stroke-width: 2; }
.shield text { font: 700 17.500px Roboto, sans-serif; text-anchor: middle; fill: #767676; }
.national rect { fill: #1d2536; } .inter rect { fill: #4a2023; } .inter text { fill: #857c7c; }
.town text { font: 400 23.500px Roboto, sans-serif; text-anchor: middle; fill: #101010; stroke: #484848; stroke-width: 4; stroke-linejoin: round; paint-order: stroke; }
.town text.end { text-anchor: end; } .town text.start { text-anchor: start; }
.reserve text { font-size: 28px; fill: #16231a; stroke: #414a41; }
.country text { font: 700 44px Roboto, sans-serif; text-anchor: middle; fill: #0b0b0b; }
.badge text { font: 700 45px "Liberation Sans", sans-serif; text-anchor: middle; fill: #555; }
.watermark text { font: 400 30px "Liberation Sans", sans-serif; fill: #949494; }
.logo text { font: 500 42px Lato, sans-serif; filter: drop-shadow(2px 2px 0 #c3c3c3) drop-shadow(-2px -2px 0 #c3c3c3) drop-shadow(1px -1px 0 #c3c3c3) drop-shadow(-1px 1px 0 #c3c3c3); }
.control { position: absolute; right: 20px; width: 80px; background: #fff; border-radius: 4px; box-shadow: 0 2px 8px rgba(0,0,0,.3); display: flex; flex-direction: column; align-items: center; justify-content: center; }
.control svg { width: 36px; height: 36px; }
.fullscreen { top: 20px; height: 80px; }
.zoom { top: 613px; height: 162px; gap: 22px; }
.zoom hr { width: 60px; height: 2px; border: 0; background: #e0e0e0; }
.credits { position: absolute; right: 0; bottom: 0; height: 28px; display: flex; font: 400 20px/28px Roboto, sans-serif; color: #000; }
.credits span { background: rgba(245,245,245,.67); text-align: center; white-space: nowrap; width: 195px; padding-right: 3px; }
.credits span + span { margin-left: 2px; width: 241px; }
.credits span + span + span { width: 139px; }

.lower { display: flex; gap: 40px; padding: 0 20px 20px; height: 430px; }
.column { width: 933px; display: flex; flex-direction: column; }
.column-head { height: 87px; flex: none; display: flex; padding-left: 39px; }
.column-head h2 { font: inherit; width: 243px; padding-top: 22px; white-space: nowrap; }
.officers .column-head { height: 85px; justify-content: center; padding: 0; }
.officers h2 { width: auto; padding-right: 6px; }
.search { margin-top: 8px; width: 649px; height: 70px; border-radius: 24px; background: #fff; border: 2px solid #b1adae; display: flex; align-items: center; padding-left: 5px; font-size: 32px; color: #747474; }
.search svg { width: 35px; height: 35px; }
.search span { margin: 4px 0 0 38px; }
.panel { flex: 1; background: #fff; padding: 0 22px 20px; min-height: 0; }
.scroll { height: 100%; overflow: hidden; padding: 8px 6px 0; display: flex; flex-direction: column; gap: 16px; }
.row { height: 104px; flex: none; border-radius: 8px; background: #fff; box-shadow: 0 2px 4px rgba(0,0,0,.18), 0 0 2px rgba(0,0,0,.16); display: flex; align-items: center; padding: 0 10px; }
.house { width: 80px; height: 80px; }
.police { width: 60px; height: 80px; margin: 0 10px; }
.who { flex: 1; margin-left: 9px; white-space: nowrap; }
.row .btn { box-shadow: 0 3px 7px rgba(0,0,0,.3); margin-bottom: 1px; }
.row .blue { width: 174px; } .row .red { width: 158px; }
```
